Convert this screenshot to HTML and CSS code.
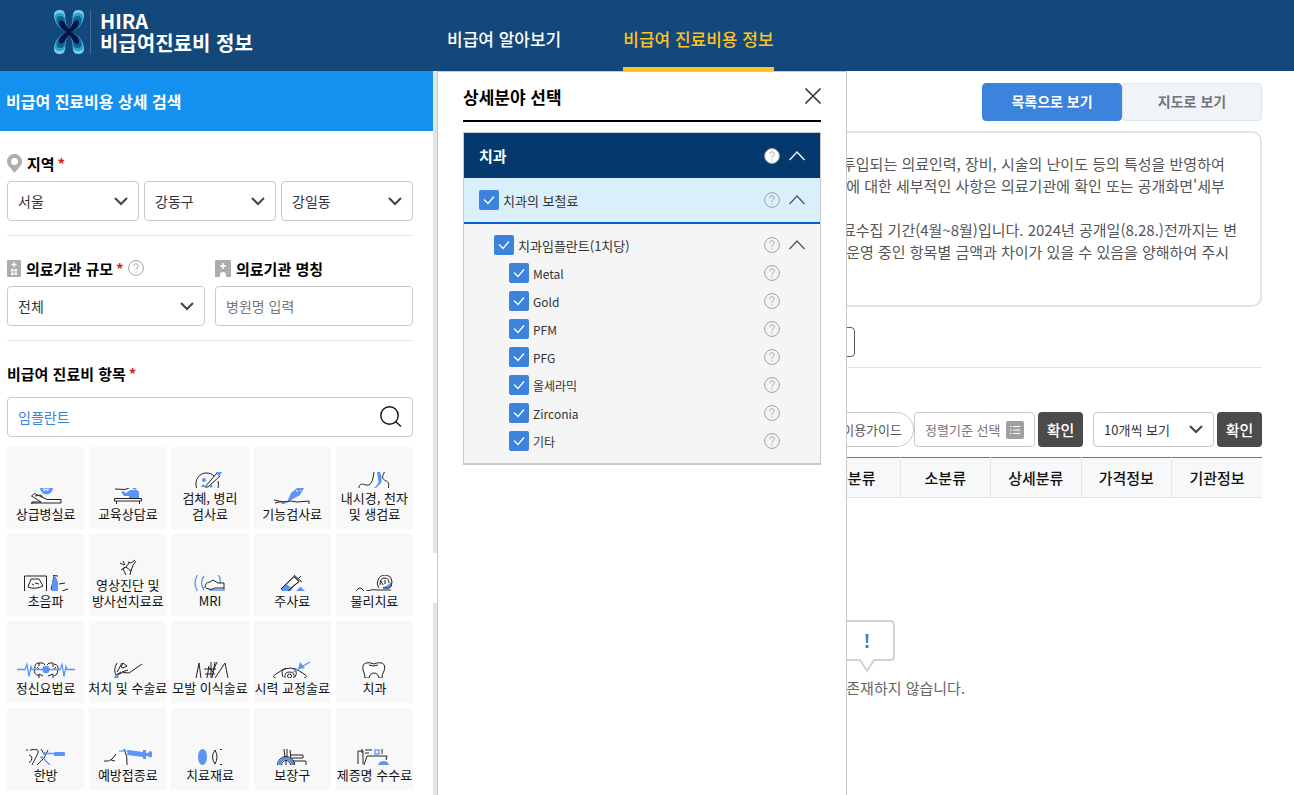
FILE: index.html
```html
<!DOCTYPE html>
<html lang="ko">
<head>
<meta charset="utf-8">
<meta name="viewport" content="width=device-width, initial-scale=1">
<title>HIRA 비급여진료비 정보</title>
<link rel="stylesheet" href="styles.css">
</head>
<body>
<svg class="defs" aria-hidden="true">
  <symbol id="help" viewBox="0 0 16 16"><circle cx="8" cy="8" r="7.4" stroke="#a3a3a3" stroke-width="1"/><path d="M5.8 6.2c0-1.5 1-2.4 2.2-2.4s2.2.8 2.2 2.1c0 1.600-2.200 1.900-2.200 3.900M8 11.300v1.200" fill="none" stroke="#a3a3a3"/></symbol>
  <symbol id="up" viewBox="0 0 16 10"><path d="M.5 9L8 1l7.500 8" fill="none" stroke="currentColor" stroke-width="1.200"/></symbol>
  <symbol id="wing" viewBox="0 0 30 44">
    <path fill="#79ceee" d="M15 22C8 21 0 14 0 5 0 1 3 0 6 0c6 0 5 6 5.500 12L15 22z"/>
    <path fill="#2f9cc9" d="M15 22C8 21 1 16 1 7c0-3 2-4 5-4 5.500 0 4.800 5 5.500 10L15 22z"/>
    <path fill="#0d6595" d="M15 22C9 21 3 17 2.500 9.500 2.500 7 4 6 6.500 6c4.500 0 4 4 5 8L15 22z"/>
    <path fill="#03163f" d="M15 24c-3-3-9-5-10-11 0-3 2-3.500 4-2 2.500 2 3.500 6 6 8z"/>
  </symbol>
</svg>

<header class="header">
  <a class="logo" href="#">
    <svg class="logo-mark" viewBox="0 0 30 44" aria-hidden="true">
      <use href="#wing" width="30" height="44"/>
      <use href="#wing" width="30" height="44" transform="matrix(-1 0 0 1 30 0)"/>
      <use href="#wing" width="30" height="44" transform="matrix(1 0 0 -1 0 44)"/>
      <use href="#wing" width="30" height="44" transform="matrix(-1 0 0 -1 30 44)"/>
    </svg>
    <span class="logo-text">HIRA<br>비급여진료비 정보</span>
  </a>
  <nav class="nav">
    <a href="#">비급여 알아보기</a>
    <a href="#" class="active">비급여 진료비용 정보</a>
  </nav>
</header>

<div class="page">
  <aside class="side">
    <h2 class="side-title">비급여 진료비용 상세 검색</h2>
    <form class="search">
      <section class="group">
        <div class="label">
          <svg width="15" height="19" viewBox="0 0 15 19" aria-hidden="true"><path fill="#adadad" fill-rule="evenodd" d="M7.500 0A7.400 7.400 0 0 0 0 7.500C0 12 4 14 7.500 19 11 14 15 12 15 7.500A7.400 7.400 0 0 0 7.500 0zm0 4a3.500 3.500 0 1 1 0 7 3.500 3.500 0 0 1 0-7z"/></svg>
          <label for="sido">지역</label><span class="req">*</span>
        </div>
        <div class="fields three">
          <select class="field" id="sido"><option>서울</option></select>
          <select class="field" aria-label="시군구"><option>강동구</option></select>
          <select class="field" aria-label="읍면동"><option>강일동</option></select>
        </div>
      </section>
      <section class="group fields two">
        <div>
          <div class="label">
            <svg width="14" height="17" viewBox="0 0 14 17" aria-hidden="true"><rect width="14" height="17" rx="1" fill="#adadad"/><path d="M7 2v5M4.500 4.500h5" stroke="#fff" stroke-width="1.300"/><path d="M4 9h2.500v2.500H4zM7.500 9H10v2.500H7.500zM4 12.500h2.500V15H4zM7.500 12.500H10V15H7.500z" fill="#fff"/></svg>
            <label for="size">의료기관 규모</label><span class="req">*</span>
            <button class="icon-btn" type="button" aria-label="도움말"><svg class="help" width="16" height="16"><use href="#help"/></svg></button>
          </div>
          <select class="field" id="size"><option>전체</option></select>
        </div>
        <div>
          <div class="label">
            <svg width="16" height="17" viewBox="0 0 16 17" aria-hidden="true"><path fill="#adadad" d="M1 0h14l1 1v16h-5v-2a3 3 0 0 0-6 0v2H0V1z"/><path d="M8 3v6M5 6h6" stroke="#fff" stroke-width="1.500"/></svg>
            <label for="name">의료기관 명칭</label>
          </div>
          <input class="field" id="name" type="text" placeholder="병원명 입력">
        </div>
      </section>
      <section class="group last">
        <div class="label"><label for="item">비급여 진료비 항목</label><span class="req">*</span></div>
        <div class="field query">
          <input id="item" type="text" value="임플란트">
          <button class="icon-btn" type="button" aria-label="검색"><svg width="22" height="22" viewBox="0 0 22 22" fill="none" stroke="#111" stroke-width="1.400"><circle cx="9.500" cy="9.500" r="8.700"/><path d="M15.500 15.500l5.500 5"/></svg></button>
        </div>
      </section>
      <div class="tiles">
        <button type="button" class="tile"><svg viewBox="0 0 58 16"><path class="b" d="M23 0h13a6.500 6.500 0 0 1-13 0z"/><path class="w" d="M27 0v3l2-2 2 2V0"/><path class="k" d="M24 14L14.500 8l3-2.500L30 11.500h14V15M24 14h-9v2M18 8l6-1 2 3M14 15h30"/></svg><span>상급병실료</span></button>
        <button type="button" class="tile"><svg viewBox="0 0 58 16"><path class="b" d="M22 4l2-1 3 2 4-3h7l2 2v6H30V8l-5 0zM33 0h5l-2 2z"/><path class="k wf" d="M15.500 10.500h27V13h-27z"/><path class="k" d="M16 1l10 .5L30 0M17.500 13v3M40.500 13v3"/></svg><span>교육상담료</span></button>
        <button type="button" class="tile"><svg viewBox="0 0 58 16"><path class="k" d="M15.500 16C13 7 19 1 25 1c4 0 6 1 8 3M37 9q1 3 0 7M24 15L36 1M27 15L39 4M24 15h3"/><path class="b" d="M35 0h6l-3 5zM20 15l2-3 3 3z"/><circle class="b" cx="23" cy="8" r="2"/><circle class="b" cx="30" cy="14" r="1.500"/></svg><span>검체, 병리<br>검사료</span></button>
        <button type="button" class="tile"><svg viewBox="0 0 58 16"><path class="b" d="M24 14l4-9 6-5h7l-4 7-9 5z"/><path class="w" d="M33 2l2 2M37 2l1 1"/><path class="k" d="M11 12l9 2 8-1 6 1 12-1v3M12 15q5-2 10-1"/><path class="bl" d="M18 16l7-2"/></svg><span>기능검사료</span></button>
        <button type="button" class="tile"><svg viewBox="0 0 58 16"><path class="w wf" d="M26 14l4-13h8v14z"/><path class="k" d="M14 16c0-5 4-4 7-3 5 1 7-4 8-13M39.500 0c-4 6-1 8 2 9 3 2 2 4 2 7"/><path class="b" d="M32 0h3q3 7 1 11l-5 5-2 0q6-5 4-9z"/></svg><span>내시경, 천자<br>및 생검료</span></button>

        <button type="button" class="tile"><svg viewBox="0 0 58 16"><path class="k" d="M7.500 16V1h22v15M14 4h8l4 7q-8 4-15 1zM18 8l4 1M15 9l2 1M36 .5l5 .5M37 1l-3 14M42 9l6-1M45 16l6-2"/><path class="b" d="M35 16V7l2-5h2l2 5v9z"/></svg><span>초음파</span></button>
        <button type="button" class="tile"><svg viewBox="0 0 58 16"><path class="k" d="M21 4l4 2M22 11l4-3M24 2l2 4M29 3l3 1 4-3M30 4l-3 4 5 4 2-6 3-4M27 8l-3 2 3 6M32 11l-1 5"/></svg><span>영상진단 및<br>방사선치료료</span></button>
        <button type="button" class="tile"><svg viewBox="0 0 58 16"><path class="bl" d="M16.500 0q-5 8 0 16M23 1q-5 7 0 14M37 0q3 3 2 8M28 15h16"/><path class="k" d="M24 13q0-6 5-6l3-2 5 3h6v6M25 13q5 3 9 0h9"/></svg><span>MRI</span></button>
        <button type="button" class="tile"><svg viewBox="0 0 58 16"><path class="k wf" d="M18 14L31 1.500l5 5L24 16h-4z"/><path class="b" d="M23 8.500l6.500 5.500-2 2h-9l-.5-2zM33 16l4.500-4.500L42 16z"/><path class="k" d="M18 14L31 1.500l5 5L25 16M31 0l8 7M35 4l3-3"/></svg><span>주사료</span></button>
        <button type="button" class="tile"><svg viewBox="0 0 58 16"><path class="b" d="M37 12q5 0 9-5 2 4-1 6-5 2-8-1z"/><path class="k" d="M11 16q4-6 8 0M21 16q7-2 13-1h12M34 13q-3-4-1-8 2-5 7-5 6 0 7 7 0 5-3 6l-6 0M35 10q0-7 4-7 5 0 5 5M36 6l2 4M40 5l0 4"/></svg><span>물리치료</span></button>

        <button type="button" class="tile"><svg viewBox="0 0 58 16"><path class="k" d="M22 1q-5 0-4 6-2 5 4 7M22 4v-3h4l2 2M30 3l2-2h4v4M37 2q5 1 4 6 0 5-4 6M22 16v-4l4 2M31 14l5-2v4M20 5l3 3M39 5l-3 3"/><path class="bl" d="M0 7.500h8l2-5 2 12 2-10 1 3h28l2-5 2 12 2-10 1 3h9"/><circle class="b" cx="29" cy="7.500" r="3.700"/></svg><span>정신요법료</span></button>
        <button type="button" class="tile"><svg viewBox="0 0 58 16"><path class="k" d="M18 1q-4 7-1 12l5-3M23 1l-5 9M24 1l4 3-4 2-2-1 2-4M18 13q5-4 12-2L43 2M23 10l6-2"/><path class="b" d="M15 16l2-4 3 2-1 2z"/></svg><span>처치 및 수술료</span></button>
        <button type="button" class="tile"><svg viewBox="0 0 58 16"><path class="k" d="M15 16L18 1l2 15M23 7h12M24 12h10M28 4l-2 12M30 0v16M34 0l-3 16M36 0l-4 9M44 1L34 16M44 1l3 15M27 5l6 6"/></svg><span>모발 이식술료</span></button>
        <button type="button" class="tile"><svg viewBox="0 0 58 16"><path class="k wf" d="M13 16q-5-1 0-4 14-12 28 0 5 3 0 4"/><path class="k" d="M20 15q-3-7 3-9M32 15q3-5-1-9M22 16q-1-6 4.500-6t4.500 6"/><circle class="k" cx="26.500" cy="14" r="2"/><path class="bl" d="M30 10L47 0"/><path class="b" d="M37 0l-2 7 7-1z"/></svg><span>시력 교정술료</span></button>
        <button type="button" class="tile"><svg viewBox="0 0 58 16"><path class="k wf" d="M20 16q0-4-2-8Q17 2 21 1q4-1 8 1 4-2 8-1 4 2 2 8-2 3-2 7h-3q-1-5-5-5t-5 5zM24 3q5 2 9 0"/></svg><span>치과</span></button>

        <button type="button" class="tile"><svg viewBox="0 0 58 16"><path class="w wf" d="M9 4h12l-4 11H9z"/><path class="k" d="M10 0v2M13 1q10-2 8 3l-6 12M12 6q6 2 0 8M24 0l3 5M31 1l-4 8-7 7"/><path class="bl" d="M26 4.500h12M25 8l8 8"/><rect class="b" x="37" y="3" width="11" height="4" rx="1"/><circle class="b" cx="27.500" cy="4.500" r="1.500"/><circle class="b" cx="24.500" cy="8.500" r="1.200"/></svg><span>한방</span></button>
        <button type="button" class="tile"><svg viewBox="0 0 58 16"><path class="w wf" d="M14 1h13v14H9z"/><path class="k" d="M5 12q5 1 8-2l4-5M12 11l4 1M25 0q4 8 3 16"/><path class="bl" d="M20 2h9"/><path class="b" d="M29 1l15 2V1h3v9h-3V8l-16-2zM47 4h2q3-4 4 0v3q-1 3-4 0h-2z"/></svg><span>예방접종료</span></button>
        <button type="button" class="tile"><svg viewBox="0 0 58 16"><ellipse class="b" cx="21.500" cy="8" rx="4.500" ry="8"/><path class="k" d="M34 1q-5 7 0 14 4-7 0-14zM39 .500h2M39 15.500h2"/></svg><span>치료재료</span></button>
        <button type="button" class="tile"><svg viewBox="0 0 58 16"><path class="k" d="M21 0l1 9M24 0v10M27 1l1 9M28 6h12v3H29M27 12h16v4M31 16v-3"/><path class="k" d="M14.500 16a8.500 8.500 0 0 1 17 0M18.500 16a4.500 4.500 0 0 1 9 0M23 11v5"/><path class="k bw" d="M16.500 16a6.500 6.500 0 0 1 13 0"/></svg><span>보장구</span></button>
        <button type="button" class="tile"><svg viewBox="0 0 58 16"><path class="k" d="M13 15V2h5v13M17 0v4M20 1h7M20 4h4M37 0v5M19 16l3-9h20l-1 4"/><rect class="bl" x="30" y="1" width="4" height="4"/><path class="b" d="M33 16q1-4 5.500-4t5.500 4z"/></svg><span>제증명 수수료</span></button>
      </div>
    </form>
  </aside>
  <div class="rail"><span class="rail-handle"></span></div>

  <main class="main">
    <div class="views">
      <button type="button" class="view on">목록으로 보기</button>
      <button type="button" class="view">지도로 보기</button>
    </div>
    <div class="notice">
      <p>투입되는 의료인력, 장비, 시술의 난이도 등의 특성을 반영하여<br>&nbsp;에 대한 세부적인 사항은 의료기관에 확인 또는 공개화면'세부</p>
      <p>료수집 기간(4월~8월)입니다. 2024년 공개일(8.28.)전까지는 변<br>&nbsp;운영 중인 항목별 금액과 차이가 있을 수 있음을 양해하여 주시</p>
    </div>
    <div class="choice"><button type="button" aria-label="검색조건"></button></div>
    <div class="tools">
      <button type="button" class="guide">이용가이드</button>
      <button type="button" class="sort">정렬기준 선택
        <svg width="18" height="18" viewBox="0 0 18 18" aria-hidden="true"><rect width="18" height="18" rx="2" fill="#a0a0a0"/><path d="M7 5.500h7M7 9h7M7 12.500h7M4 5.500h1.500M4 9h1.500M4 12.500h1.500" stroke="#fff"/></svg>
      </button>
      <button type="button" class="ok">확인</button>
      <select class="field per" aria-label="목록 개수"><option>10개씩 보기</option></select>
      <button type="button" class="ok">확인</button>
    </div>
    <table class="list">
      <thead><tr><th></th><th></th><th></th><th></th><th>중분류</th><th>소분류</th><th>상세분류</th><th>가격정보</th><th>기관정보</th></tr></thead>
    </table>
    <div class="empty">
      <svg width="56" height="53" viewBox="0 0 56 53" aria-hidden="true"><path d="M5 1h46q4 0 4 4v31q0 4-4 4H35l-7 11-7-11H5q-4 0-4-4V5q0-4 4-4z" fill="#fff" stroke="#d2d2d2" stroke-width="2"/><path d="M26.500 14h3l-.5 9h-2zM26.600 25h2.800v3h-2.800z" fill="#3d7ec4"/></svg>
      <p>조회 자료가 존재하지 않습니다.</p>
    </div>
  </main>

  <section class="panel" role="dialog" aria-labelledby="panel-title">
    <div class="panel-head">
      <h2 id="panel-title">상세분야 선택</h2>
      <button type="button" class="icon-btn" aria-label="닫기"><svg width="16" height="16" viewBox="0 0 16 16"><path d="M.5.5l15 15M15.500.5l-15 15" stroke="#444" stroke-width="1.600"/></svg></button>
    </div>
    <div class="card">
      <div class="row dept"><strong>치과</strong>
        <button type="button" class="icon-btn" aria-label="치과 도움말"><svg class="help" width="16" height="16"><use href="#help"/></svg></button>
        <button type="button" class="icon-btn" aria-label="접기"><svg width="16" height="10"><use href="#up"/></svg></button></div>
      <div class="row kind"><input type="checkbox" id="c0" checked><label for="c0">치과의 보철료</label>
        <button type="button" class="icon-btn" aria-label="도움말"><svg class="help" width="16" height="16"><use href="#help"/></svg></button>
        <button type="button" class="icon-btn" aria-label="접기"><svg width="16" height="10"><use href="#up"/></svg></button></div>
      <div class="items">
        <div class="row item"><input type="checkbox" id="c1" checked><label for="c1">치과임플란트(1치당)</label>
          <button type="button" class="icon-btn" aria-label="도움말"><svg class="help" width="16" height="16"><use href="#help"/></svg></button>
          <button type="button" class="icon-btn" aria-label="접기"><svg width="16" height="10"><use href="#up"/></svg></button></div>
        <div class="row sub"><input type="checkbox" id="c2" checked><label for="c2">Metal</label><button type="button" class="icon-btn" aria-label="도움말"><svg class="help" width="16" height="16"><use href="#help"/></svg></button></div>
        <div class="row sub"><input type="checkbox" id="c3" checked><label for="c3">Gold</label><button type="button" class="icon-btn" aria-label="도움말"><svg class="help" width="16" height="16"><use href="#help"/></svg></button></div>
        <div class="row sub"><input type="checkbox" id="c4" checked><label for="c4">PFM</label><button type="button" class="icon-btn" aria-label="도움말"><svg class="help" width="16" height="16"><use href="#help"/></svg></button></div>
        <div class="row sub"><input type="checkbox" id="c5" checked><label for="c5">PFG</label><button type="button" class="icon-btn" aria-label="도움말"><svg class="help" width="16" height="16"><use href="#help"/></svg></button></div>
        <div class="row sub"><input type="checkbox" id="c6" checked><label for="c6">올세라믹</label><button type="button" class="icon-btn" aria-label="도움말"><svg class="help" width="16" height="16"><use href="#help"/></svg></button></div>
        <div class="row sub"><input type="checkbox" id="c7" checked><label for="c7">Zirconia</label><button type="button" class="icon-btn" aria-label="도움말"><svg class="help" width="16" height="16"><use href="#help"/></svg></button></div>
        <div class="row sub"><input type="checkbox" id="c8" checked><label for="c8">기타</label><button type="button" class="icon-btn" aria-label="도움말"><svg class="help" width="16" height="16"><use href="#help"/></svg></button></div>
      </div>
    </div>
  </section>
</div>
</body>
</html>
```
FILE: styles.css
```css
* { box-sizing: border-box; margin: 0; padding: 0; }
body {
  height: 100vh;
  display: flex;
  flex-direction: column;
  overflow: hidden;
  background: #fff;
  color: #333;
  font-family: "Noto Sans CJK KR", "Noto Sans", sans-serif;
  font-size: 14px;
}
button, input, select { font: inherit; color: inherit; }
button { cursor: pointer; }
a { color: inherit; text-decoration: none; }
svg { display: block; flex: none; }
.defs { position: absolute; width: 0; height: 0; }
.icon-btn { border: 0; background: none; display: flex; color: #555; }
.help { fill: none; }

/* Header */
.header { flex: none; display: flex; height: 71px; background: #13487a; color: #fff; }
.logo { flex: none; display: flex; align-items: center; width: 415px; padding: 0 0 8px 54px; }
.logo-mark { width: 30px; height: 44px; }
.logo-text {
  margin-left: 6px;
  padding-left: 9px;
  border-left: 1px solid #3f6b95;
  font-size: 20px;
  font-weight: 700;
  line-height: 22px;
  white-space: nowrap;
}
.nav { display: flex; gap: 62px; padding-left: 32px; font-size: 17px; font-weight: 500; white-space: nowrap; }
.nav a { display: flex; align-items: center; padding-top: 9px; border-bottom: 4px solid transparent; }
.nav .active { color: #ffc222; border-color: #ffc222; }

/* Layout */
.page { position: relative; flex: 1; min-height: 0; display: flex; }
.side { flex: none; width: 433px; overflow: hidden; }
.rail { flex: none; display: flex; align-items: center; width: 5px; background: #e4e4e4; }
.rail-handle { width: 4px; height: 50px; margin-top: 289px; background: #fff; }

/* Search form */
.side-title {
  display: flex;
  align-items: center;
  height: 60px;
  padding: 0 6px;
  background: #1491ef;
  color: #fff;
  font-size: 16px;
  font-weight: 700;
}
.search { padding: 0 20px 0 7px; }
.group { padding: 14px 0; border-bottom: 1px solid #e6e6e6; }
.group.last { padding-bottom: 10px; border: 0; }
.group.last .label { margin-bottom: 6px; }
.label { display: flex; align-items: center; height: 36px; color: #000; font-size: 15px; font-weight: 700; white-space: nowrap; }
.label > svg { margin-right: 5px; }
.label .req { margin: 0 4px 0 3px; color: #e02020; }
.fields { display: grid; }
.three { grid-template-columns: repeat(3, 1fr); gap: 5px; }
.two { grid-template-columns: repeat(2, 1fr); gap: 10px; }
.field {
  display: block;
  width: 100%;
  height: 40px;
  padding: 0 10px;
  border: 1px solid #c9c9c9;
  border-radius: 4px;
  background: #fff;
}
.field::placeholder { color: #777; }
select.field {
  appearance: none;
  background: #fff url("data:image/svg+xml,%3Csvg xmlns='http://www.w3.org/2000/svg' width='14' height='9' viewBox='0 0 14 9'%3E%3Cpath d='M1 1l6 6 6-6' fill='none' stroke='%23444' stroke-width='2'/%3E%3C/svg%3E") no-repeat right 10px center;
}
.query { display: flex; align-items: center; }
.query input { flex: 1; min-width: 0; border: 0; outline: 0; color: #3b83dc; }

/* Item tiles */
.tiles { display: grid; grid-template-columns: repeat(5, minmax(0, 1fr)); gap: 5px; }
.tile {
  display: flex;
  flex-direction: column;
  align-items: center;
  justify-content: flex-end;
  gap: 2px;
  height: 82px;
  padding-bottom: 7px;
  border: 0;
  background: #f8f8f8;
  color: #111;
  font-size: 13px;
  line-height: 16px;
  white-space: nowrap;
}
.tile svg { width: 58px; height: 16px; }
.tile .k { fill: none; stroke: #222; stroke-width: 1; }
.tile .b { fill: #5b96f7; }
.tile .bl { fill: none; stroke: #5b96f7; stroke-width: 1.3; }
.tile .w { fill: none; stroke: #fff; }
.tile .wf { fill: #fff; }
.tile .bw { stroke: #4f8df0; stroke-width: 2.4; }

/* Results */
.main { flex: 1; min-width: 0; padding: 12px 32px 0 9px; }
.views { display: flex; justify-content: flex-end; }
.view {
  width: 140px;
  height: 38px;
  padding-bottom: 2px;
  border: 1px solid #dfe6ea;
  border-radius: 4px;
  background: #f0f4f8;
  color: #6f747b;
  font-weight: 700;
}
.view.on { border-color: #3b83dc; background: #3b83dc; color: #fff; }
.notice {
  display: grid;
  gap: 22px;
  margin-top: 10px;
  padding: 20px 0 42px 393px;
  border: 2px solid #dae5e9;
  border-radius: 10px;
  color: #555;
  font-size: 15px;
  line-height: 22px;
  white-space: nowrap;
}
.choice { margin-top: 20px; padding-bottom: 10px; border-bottom: 1px solid #e4e4e4; }
.choice button { display: block; width: 408px; height: 30px; border: 1px solid #555b6b; border-radius: 4px; background: #fff; }
.tools { display: flex; justify-content: flex-end; gap: 3px; margin-top: 44px; font-size: 13px; white-space: nowrap; }
.tools > * { height: 35px; }
.guide { width: 124px; margin-right: -3px; padding-right: 11px; border: 1px solid #c9c9c9; border-radius: 18px; background: #fff; color: #555; text-align: right; }
.sort { display: flex; align-items: center; justify-content: space-between; width: 121px; padding: 0 10px; border: 1px solid #c9c9c9; border-radius: 4px; background: #fff; color: #777; }
.ok { width: 45px; border: 0; border-radius: 4px; background: #4b4b4b; color: #fff; font-size: 15px; font-weight: 500; }
.per { width: 121px; margin-left: 7px; }
.list { width: 100%; margin-top: 10px; border-collapse: collapse; table-layout: fixed; border-top: 1px solid #777; background: #f6f8fa; }
.list th { height: 40px; border-bottom: 1px solid #dfe2e5; border-left: 1px solid #e3e6e8; color: #111; font-size: 15px; font-weight: 500; }
.empty {
  display: flex;
  flex-direction: column;
  align-items: center;
  margin: 122px -32px 0 -7px;
  color: #666;
  font-size: 15px;
  line-height: 30px;
}

/* Detail picker, laid over the results */
.panel {
  position: absolute;
  z-index: 2;
  top: 0;
  bottom: 0;
  left: 437px;
  width: 410px;
  padding: 0 25px;
  border: 1px solid #c9c9cb;
  border-bottom: 0;
  background: #fff;
}
.panel-head { display: flex; align-items: center; justify-content: space-between; height: 50px; border-bottom: 2px solid #000; }
.panel-head h2 { color: #000; font-size: 17px; font-weight: 700; }
.card { margin-top: 10px; border: 1px solid #c9c9cb; border-bottom-width: 2px; background: #f5f5f5; }
.row { display: flex; align-items: center; gap: 9px; height: 28px; padding: 0 15px; font-size: 13px; }
.row input {
  appearance: none;
  width: 20px;
  height: 20px;
  margin-right: -5px;
  border-radius: 2px;
  background: #3b83dc url("data:image/svg+xml,%3Csvg xmlns='http://www.w3.org/2000/svg' width='20' height='20'%3E%3Cpath d='M5 9.500l4 4 6-7' fill='none' stroke='%23fff' stroke-width='1.300'/%3E%3C/svg%3E") center;
}
.row label, .row strong { flex: 1; }
.dept { height: 45px; background: #03396c; font-size: 15px; color: #fff; }
.dept .icon-btn { color: #fff; }
.dept .help { fill: #fff; }
.kind { height: 44px; background: #d9effc; }
.items { padding: 7px 0 8px; border-top: 2px solid #0a5bd8; }
.item { padding-left: 30px; }
.sub { padding: 0 40px 0 45px; font-size: 12px; }
```
